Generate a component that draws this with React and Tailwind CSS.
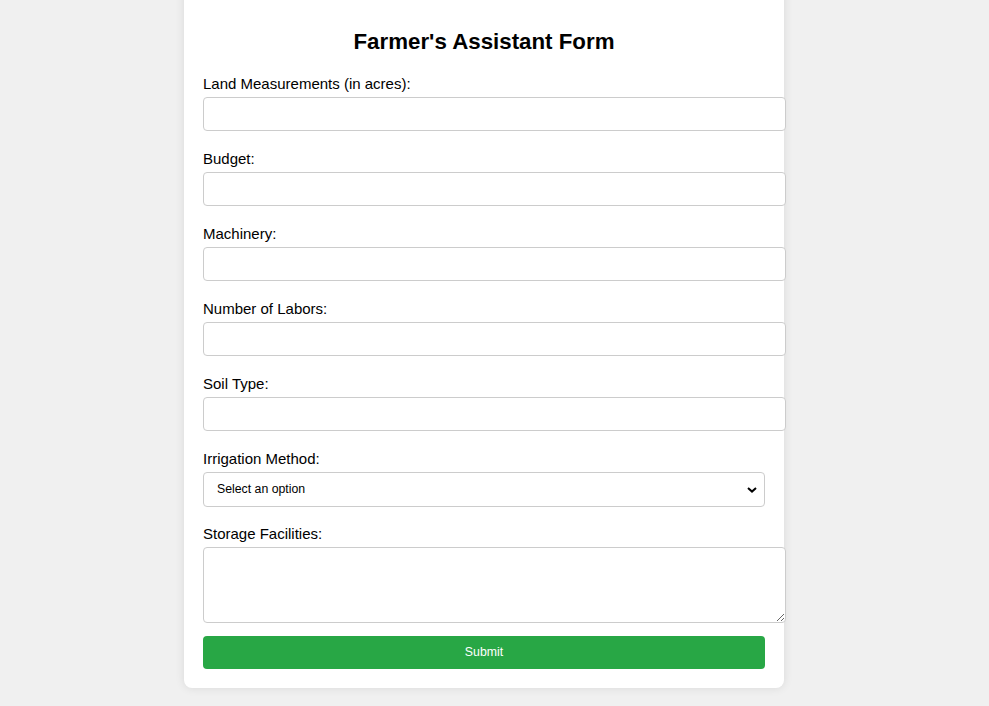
import React from "react";

const labelCls = "block h-[16px] leading-[16px] text-[15px] text-black mb-[5px] whitespace-nowrap";
const inputCls = "block w-[583px] h-[34px] border border-[#cccccc] rounded-[4px] bg-white outline-none";

function Field({ label }) {
  return (
    <div className="mb-[20px]">
      <label className={labelCls}>{label}</label>
      <input type="text" className={inputCls} />
    </div>
  );
}

export default function App() {
  return (
    <div
      className="min-h-screen w-full bg-[#f0f0f0] overflow-hidden"
      style={{ fontFamily: '"Liberation Sans", Arial, sans-serif' }}
    >
      <div className="w-[968px] flex justify-center">
        <div className="w-[600px] -mt-[20px] bg-white rounded-[8px] shadow-[0_0_10px_rgba(0,0,0,0.1)] pt-[49px] pb-[19px] px-[19px]">
          <h2 className="text-[22.3px] leading-[26px] font-bold text-black text-center mb-[21px]">
            Farmer's Assistant Form
          </h2>
          <form onSubmit={(e) => e.preventDefault()}>
            <Field label="Land Measurements (in acres):" />
            <Field label="Budget:" />
            <Field label="Machinery:" />
            <Field label="Number of Labors:" />
            <Field label="Soil Type:" />
            <div className="mb-[19px]">
              <label className={labelCls}>Irrigation Method:</label>
              <div className="relative w-[562px] h-[35px]">
                <select
                  defaultValue=""
                  className="appearance-none block w-full h-full border border-[#cccccc] rounded-[4px] bg-white pl-[13px] text-[12.3px] text-black outline-none"
                  style={{ fontFamily: '"Liberation Sans", Arial, sans-serif' }}
                >
                  <option value="">Select an option</option>
                  <option value="drip">Drip</option>
                  <option value="sprinkler">Sprinkler</option>
                  <option value="flood">Flood</option>
                </select>
                <svg
                  className="absolute right-[8px] top-[15px] pointer-events-none"
                  width="10"
                  height="6"
                  viewBox="0 0 10 6"
                >
                  <path d="M1 1 L5 4.6 L9 1" fill="none" stroke="#000" strokeWidth="2" />
                </svg>
              </div>
            </div>
            <div className="mb-[13px]">
              <label className={labelCls}>Storage Facilities:</label>
              <textarea className="block w-[583px] h-[76px] border border-[#cccccc] rounded-[4px] bg-white outline-none" />
            </div>
            <button
              type="submit"
              className="block w-[562px] h-[33px] bg-[#28a745] text-white text-[12.3px] rounded-[4px]"
            >
              Submit
            </button>
          </form>
        </div>
      </div>
    </div>
  );
}
